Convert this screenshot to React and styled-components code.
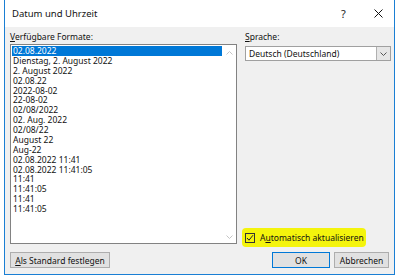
import { createGlobalStyle, styled } from "styled-components";

const formats = [
  "02.08.2022",
  "Dienstag, 2. August 2022",
  "2. August 2022",
  "02.08.22",
  "2022-08-02",
  "22-08-02",
  "02/08/2022",
  "02. Aug. 2022",
  "02/08/22",
  "August 22",
  "Aug-22",
  "02.08.2022 11:41",
  "02.08.2022 11:41:05",
  "11:41",
  "11:41:05",
  "11:41",
  "11:41:05",
];

const Chevron = ({ up }) => (
  <svg width="7" height="4" viewBox="0 0 7 4">
    <path
      d={up ? "M0.5 3.5 L3.5 0.5 L6.5 3.5" : "M0.5 0.5 L3.5 3.5 L6.5 0.5"}
      fill="none"
      stroke="currentColor"
      strokeWidth="1"
    />
  </svg>
);

const App = () => {
  return (
    <>
      <GlobalStyle />
      <Window>
        <TitleBar>
          <Title>Datum und Uhrzeit</Title>
          <TitleButton>?</TitleButton>
          <TitleButton>
            <svg width="9" height="9" viewBox="0 0 9 9">
              <path d="M0.5 0.5 L8.5 8.5 M8.5 0.5 L0.5 8.5" stroke="#111" strokeWidth="1" />
            </svg>
          </TitleButton>
        </TitleBar>
        <Body>
          <Column>
            <Label>
              <u>V</u>erfügbare Formate:
            </Label>
            <ListBox>
              <Items>
                {formats.map((f, i) => (
                  <Item key={i} $selected={i === 0}>
                    {f}
                  </Item>
                ))}
              </Items>
              <ScrollBar>
                <Chevron up />
                <Chevron />
              </ScrollBar>
            </ListBox>
            <ButtonRow>
              <Button $width="100px">
                <u>A</u>ls Standard festlegen
              </Button>
            </ButtonRow>
          </Column>
          <Column>
            <Label>
              <u>S</u>prache:
            </Label>
            <Combo>
              <ComboText>Deutsch (Deutschland)</ComboText>
              <ComboArrow>
                <Chevron />
              </ComboArrow>
            </Combo>
            <CheckRow>
              <Highlight>
                <CheckBox>
                  <svg width="8" height="8" viewBox="0 0 8 8">
                    <path d="M1 4 L3 6.2 L7 1.2" fill="none" stroke="#222" strokeWidth="1" />
                  </svg>
                </CheckBox>
                <span>
                  A<u>u</u>tomatisch aktualisieren
                </span>
              </Highlight>
            </CheckRow>
            <ButtonRow $end>
              <Button $width="58px" $default>
                OK
              </Button>
              <Button $width="55px">Abbrechen</Button>
            </ButtonRow>
          </Column>
        </Body>
      </Window>
    </>
  );
};

const GlobalStyle = createGlobalStyle`
  body {
    margin: 0;
    background: #ffffff;
    font-family: "Noto Sans", "Open Sans", sans-serif;
    color: #000;
  }
`;

const Window = styled.div`
  display: flex;
  flex-direction: column;
  width: 389px;
  height: 274px;
  margin-left: 4px;
  border: 1px solid #1a7fd4;
  border-top: none;
`;

const TitleBar = styled.div`
  display: flex;
  align-items: center;
  height: 27px;
  padding-left: 7px;
  padding-right: 11px;
  background: #ffffff;
  gap: 26px;
`;

const Title = styled.div`
  flex: 1;
  font-size: 9.5px;
  color: #111;
`;

const TitleButton = styled.div`
  display: flex;
  align-items: center;
  justify-content: center;
  width: 9px;
  font-size: 11px;
  color: #222;
`;

const Body = styled.div`
  flex: 1;
  display: grid;
  grid-template-columns: 227px 146px;
  column-gap: 8px;
  padding: 4px 3px 6px 5px;
  background: #f0f0f0;
`;

const Column = styled.div`
  display: flex;
  flex-direction: column;
`;

const Label = styled.div`
  height: 13px;
  font-size: 8.5px;
  line-height: 12px;
  color: #111;
`;

const ListBox = styled.div`
  display: flex;
  height: 198px;
  border: 1px solid #828282;
  background: #ffffff;
`;

const Items = styled.div`
  flex: 1;
  padding: 1px 0 0 1px;
`;

const Item = styled.div`
  height: 9.88px;
  line-height: 9.88px;
  padding-left: 1px;
  font-size: 8.5px;
  white-space: nowrap;
  color: ${(p) => (p.$selected ? "#ffffff" : "#111")};
  background: ${(p) => (p.$selected ? "#0078d7" : "transparent")};
`;

const ScrollBar = styled.div`
  display: flex;
  flex-direction: column;
  justify-content: space-between;
  align-items: center;
  width: 14px;
  padding: 6px 0 4px;
  color: #c4c4c4;
`;

const ButtonRow = styled.div`
  display: flex;
  justify-content: ${(p) => (p.$end ? "flex-end" : "flex-start")};
  gap: 4px;
  margin-top: 8px;
  padding-right: ${(p) => (p.$end ? "2px" : "0")};
`;

const Button = styled.div`
  display: flex;
  align-items: center;
  justify-content: center;
  box-sizing: border-box;
  width: ${(p) => p.$width};
  height: 16px;
  font-size: 8.5px;
  color: #111;
  background: #e1e1e1;
  border: 1px solid ${(p) => (p.$default ? "#0078d7" : "#adadad")};
`;

const Combo = styled.div`
  display: flex;
  box-sizing: border-box;
  height: 15px;
  margin-top: 2px;
  border: 1px solid #a0a0a0;
  background: #ffffff;
`;

const ComboText = styled.div`
  flex: 1;
  padding-left: 3px;
  font-size: 8.5px;
  line-height: 13px;
  color: #111;
`;

const ComboArrow = styled.div`
  display: flex;
  align-items: center;
  justify-content: center;
  width: 13px;
  background: #e6e6e6;
  border-left: 1px solid #b0b0b0;
  color: #555;
`;

const CheckRow = styled.div`
  flex: 1;
  display: flex;
  align-items: flex-end;
  margin-left: -3px;
  margin-bottom: -3px;
`;

const Highlight = styled.div`
  display: flex;
  align-items: center;
  gap: 5px;
  padding: 4px 2px 4px 3px;
  font-size: 8.5px;
  color: #111;
  background: #f4f40c;
  border-radius: 4px;
`;

const CheckBox = styled.div`
  display: flex;
  align-items: center;
  justify-content: center;
  box-sizing: border-box;
  width: 10px;
  height: 10px;
  border: 1px solid #333;
  background: transparent;
`;

export default App;
